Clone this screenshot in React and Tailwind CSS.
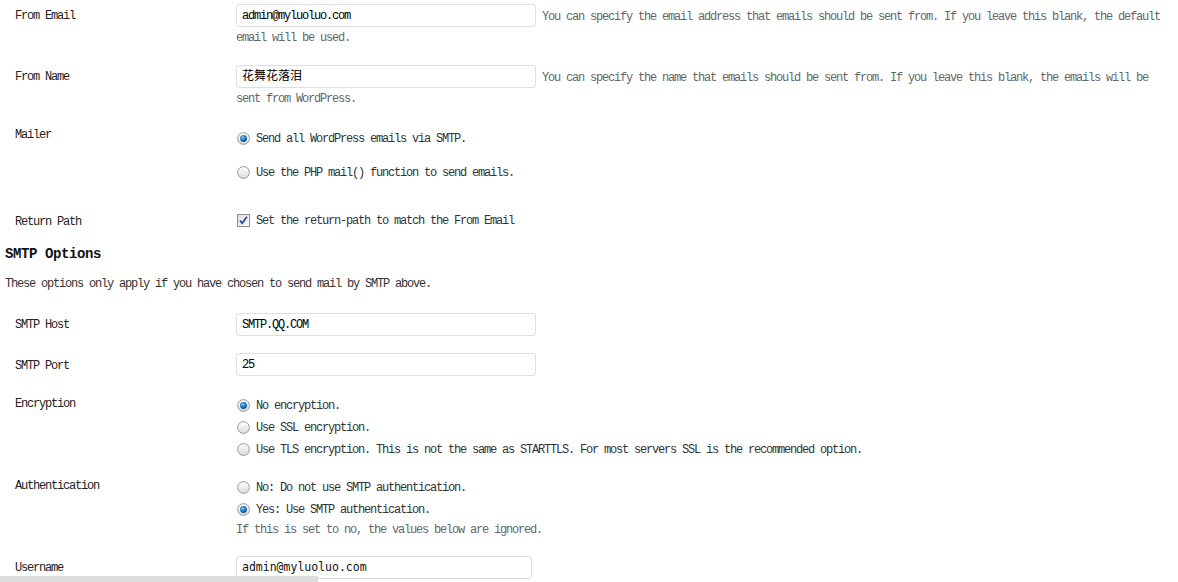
import React from 'react'

const mono = "font-['Liberation_Mono','Noto_Sans_CJK_SC',monospace] text-[12px] tracking-[-1.2px]"

function Radio({ checked }) {
	return (
		<svg width="13" height="13" viewBox="0 0 13 13" className="shrink-0">
			<defs>
				<linearGradient id={checked ? 'rg1' : 'rg0'} x1="0" y1="0" x2="0" y2="1">
					<stop offset="0" stopColor="#ffffff" />
					<stop offset="1" stopColor="#d9d9d9" />
				</linearGradient>
				<radialGradient id="dot" cx="0.4" cy="0.35" r="0.7">
					<stop offset="0" stopColor="#7fd0ff" />
					<stop offset="0.5" stopColor="#1c7fcf" />
					<stop offset="1" stopColor="#0d3f73" />
				</radialGradient>
			</defs>
			<circle cx="6.5" cy="6.5" r="5.9" fill={`url(#${checked ? 'rg1' : 'rg0'})`} stroke="#9a9a9a" strokeWidth="1" />
			{checked && <circle cx="6.5" cy="6.5" r="3.4" fill="url(#dot)" />}
		</svg>
	)
}

function Checkbox() {
	return (
		<svg width="13" height="13" viewBox="0 0 13 13" className="shrink-0">
			<defs>
				<linearGradient id="cb" x1="0" y1="0" x2="1" y2="1">
					<stop offset="0" stopColor="#dcdcdc" />
					<stop offset="1" stopColor="#ffffff" />
				</linearGradient>
			</defs>
			<rect x="0.5" y="0.5" width="12" height="12" fill="url(#cb)" stroke="#8e8f8f" />
			<path d="M3 6.5 L5.2 9.2 L10 2.8" fill="none" stroke="#2a4ea6" strokeWidth="1.8" />
		</svg>
	)
}

function Label({ children, lead = 'leading-[23px] pt-[1px]' }) {
	return <div className={`w-[236px] shrink-0 pl-[15px] text-[#222] ${lead}`}>{children}</div>
}

function TextInput({ value, cjk, className = '' }) {
	return (
		<span
			className={`inline-block h-[23px] w-[300px] shrink-0 rounded-[3px] border border-[#dfdfdf] bg-white pl-[5px] align-middle leading-[22px] text-black ${cjk ? 'tracking-normal' : ''} ${className}`}
		>
			{value}
		</span>
	)
}

function Choice({ children, checked, box }) {
	return (
		<div className="flex h-[22px] items-center gap-[6px] pl-[1px] text-[#333]">
			{box ? <Checkbox /> : <Radio checked={checked} />}
			<span className="pt-[2px]">{children}</span>
		</div>
	)
}

// input with a description that runs on beside it and wraps under it
function FieldWithNote({ value, cjk, first, rest }) {
	return (
		<div className="flex-1 text-[#666]">
			<div className="flex items-center gap-[6px]">
				<TextInput value={value} cjk={cjk} />
				<span className="whitespace-nowrap pt-[2px]">{first}</span>
			</div>
			<div className="leading-[22px]">{rest}</div>
		</div>
	)
}

export default function App() {
	return (
		<div className={`relative h-[582px] w-full overflow-hidden bg-white pt-[4px] ${mono}`}>
			{/* From Email */}
			<div className="flex h-[61px]">
				<Label>From Email</Label>
				<FieldWithNote
					value="admin@myluoluo.com"
					first="You can specify the email address that emails should be sent from. If you leave this blank, the default"
					rest="email will be used."
				/>
			</div>

			{/* From Name */}
			<div className="flex h-[57px]">
				<Label>From Name</Label>
				<FieldWithNote
					value="花舞花落泪"
					cjk
					first="You can specify the name that emails should be sent from. If you leave this blank, the emails will be"
					rest="sent from WordPress."
				/>
			</div>

			{/* Mailer */}
			<div className="flex h-[87px]">
				<Label lead="leading-[22px] pt-[2px]">Mailer</Label>
				<div className="flex-1 pt-[5px]">
					<Choice checked>Send all WordPress emails via SMTP.</Choice>
					<div className="mt-[12px]">
						<Choice>Use the PHP mail() function to send emails.</Choice>
					</div>
				</div>
			</div>

			{/* Return Path */}
			<div className="flex h-[33px]">
				<Label lead="leading-[22px] pt-[2px]">Return Path</Label>
				<div className="flex-1">
					<Choice box>Set the return-path to match the From Email</Choice>
				</div>
			</div>

			<h3 className="mt-[1px] pl-[5px] text-[14px] font-bold leading-[22px] tracking-[-0.4px] text-[#111]">SMTP Options</h3>
			<p className="mt-[8px] pl-[5px] leading-[22px] text-[#333]">
				These options only apply if you have chosen to send mail by SMTP above.
			</p>

			{/* SMTP Host */}
			<div className="mt-[18px] flex">
				<Label lead="leading-[23px] pt-[1px]">SMTP Host</Label>
				<div className="flex-1 leading-[22px]">
					<TextInput value="SMTP.QQ.COM" />
				</div>
			</div>

			{/* SMTP Port */}
			<div className="mt-[16px] flex">
				<Label lead="leading-[23px] pt-[2px]">SMTP Port</Label>
				<div className="flex-1 leading-[22px]">
					<TextInput value="25" />
				</div>
			</div>

			{/* Encryption */}
			<div className="mt-[15px] flex">
				<Label lead="leading-[22px] pt-[0px]">Encryption</Label>
				<div className="flex-1 pt-[1px]">
					<Choice checked>No encryption.</Choice>
					<Choice>Use SSL encryption.</Choice>
					<Choice>Use TLS encryption. This is not the same as STARTTLS. For most servers SSL is the recommended option.</Choice>
				</div>
			</div>

			{/* Authentication */}
			<div className="mt-[15px] flex">
				<Label lead="leading-[22px] pt-[0px]">Authentication</Label>
				<div className="flex-1 pt-[1px]">
					<Choice>No: Do not use SMTP authentication.</Choice>
					<Choice checked>Yes: Use SMTP authentication.</Choice>
					<p className="pt-[1px] leading-[18px] text-[#666]">If this is set to no, the values below are ignored.</p>
				</div>
			</div>

			{/* Username */}
			<div className="mt-[17px] flex">
				<Label lead="leading-[23px] pt-[1px]">Username</Label>
				<div className="flex-1">
					<span className="inline-block h-[23px] w-[296px] rounded-[3px] border border-[#dddddd] bg-white pl-[5px] align-middle font-['DejaVu_Sans_Mono',monospace] text-[11.5px] leading-[21px] tracking-normal text-[#111]">
						admin@myluoluo.com
					</span>
				</div>
			</div>

			{/* horizontal scrollbar thumb */}
			<div className="absolute bottom-0 left-0 h-[6px] w-[318px] bg-[#dcdcdc]" />
		</div>
	)
}
